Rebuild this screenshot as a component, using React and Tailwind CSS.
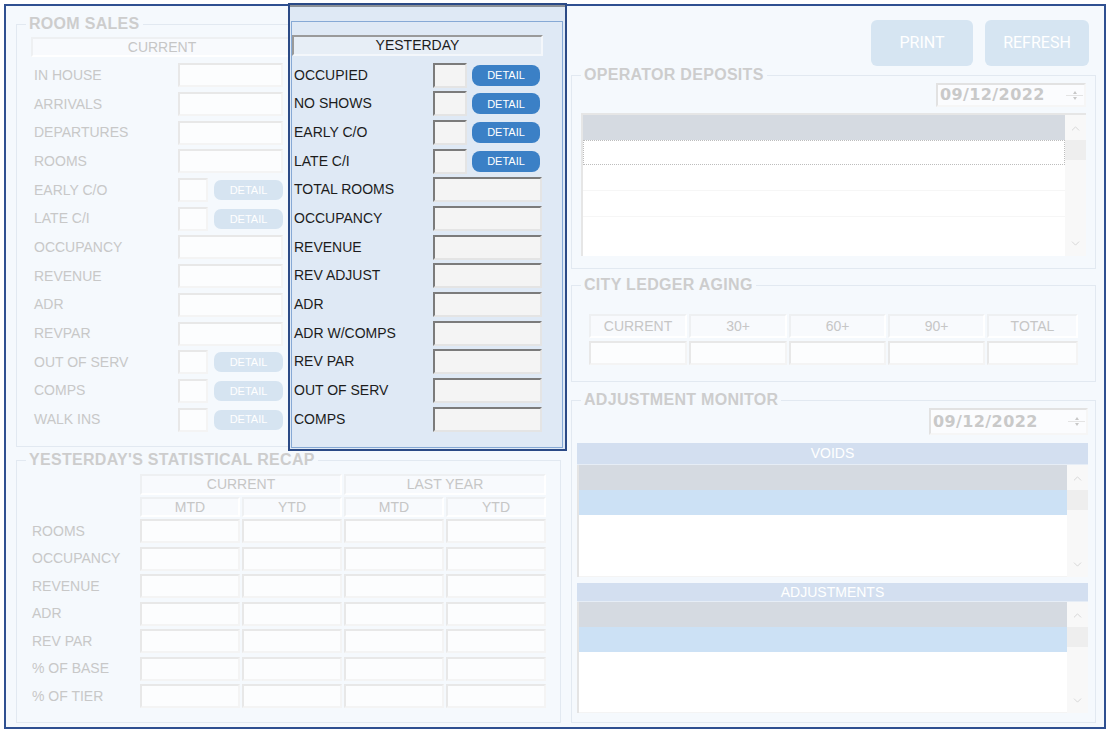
import React from "react";
import { ChevronUp, ChevronDown } from "lucide-react";

const roomSales = [
  { label: "IN HOUSE" },
  { label: "ARRIVALS" },
  { label: "DEPARTURES" },
  { label: "ROOMS" },
  { label: "EARLY C/O", detail: true },
  { label: "LATE C/I", detail: true },
  { label: "OCCUPANCY" },
  { label: "REVENUE" },
  { label: "ADR" },
  { label: "REVPAR" },
  { label: "OUT OF SERV", detail: true },
  { label: "COMPS", detail: true },
  { label: "WALK INS", detail: true }
];

const yesterday = [
  { label: "OCCUPIED", detail: true },
  { label: "NO SHOWS", detail: true },
  { label: "EARLY C/O", detail: true },
  { label: "LATE C/I", detail: true },
  { label: "TOTAL ROOMS" },
  { label: "OCCUPANCY" },
  { label: "REVENUE" },
  { label: "REV ADJUST" },
  { label: "ADR" },
  { label: "ADR W/COMPS" },
  { label: "REV PAR" },
  { label: "OUT OF SERV" },
  { label: "COMPS" }
];

const recapRows = ["ROOMS", "OCCUPANCY", "REVENUE", "ADR", "REV PAR", "% OF BASE", "% OF TIER"];
const agingCols = ["CURRENT", "30+", "60+", "90+", "TOTAL"];

// faded (disabled) text box
const FadedBox = ({ className = "" }) => (
  <div className={`h-[24px] border-2 border-t-[#e8e8e8] border-l-[#e8e8e8] border-r-[#f4f4f4] border-b-[#f4f4f4] bg-[#fcfdfe] ${className}`} />
);

// active sunken text box
const SunkenBox = ({ className = "" }) => (
  <div className={`h-[25px] border-2 border-t-[#7b7b7b] border-l-[#7b7b7b] border-r-[#e4e4e4] border-b-[#e4e4e4] bg-[#f4f4f4] ${className}`} />
);

const FadedHead = ({ children, className = "" }) => (
  <div className={`flex items-center justify-center border-2 border-t-[#eef0f2] border-l-[#eef0f2] border-r-white border-b-white bg-[#f8fafd] text-[14px] text-[#c6c6c6] ${className}`}>
    {children}
  </div>
);

const Group = ({ title, className = "", children }) => (
  <fieldset className={`border border-[#e2e9f1] ${className}`}>
    <legend className="ml-[9px] px-[3px] text-[16px] leading-[16px] font-bold tracking-[0.3px] text-[#cdcdcd]">{title}</legend>
    {children}
  </fieldset>
);

const Scrollbar = () => (
  <div className="w-[21px] bg-[#f8f8f8] flex flex-col items-center">
    <ChevronUp size={13} strokeWidth={1.5} className="mt-[7px] text-[#cfcfcf]" />
    <div className="mt-[5px] w-[21px] h-[20px] bg-[#eeeeee]" />
    <div className="flex-1" />
    <ChevronDown size={13} strokeWidth={1.5} className="mb-[6px] text-[#cfcfcf]" />
  </div>
);

const DateBox = ({ className = "" }) => (
  <div className={`ml-auto flex border-2 border-t-[#e2e2e2] border-l-[#e2e2e2] border-r-[#f6f6f6] border-b-[#f6f6f6] bg-[#fbfcfe] ${className}`}>
    <div className="flex-1 flex items-center pl-[2px] font-['DejaVu_Sans',sans-serif] font-bold text-[16px] tracking-[0.4px] text-[#c9c9c9]">
      09/12/2022
    </div>
    <div className="w-[19px] flex flex-col items-center justify-center gap-[1px]">
      <div className="w-0 h-0 border-l-[2px] border-r-[2px] border-b-[3px] border-l-transparent border-r-transparent border-b-[#c8c8c8]" />
      <div className="w-[17px] h-px bg-[#e4e4e4]" />
      <div className="w-0 h-0 border-l-[2px] border-r-[2px] border-t-[3px] border-l-transparent border-r-transparent border-t-[#c8c8c8]" />
    </div>
  </div>
);

const MonitorList = ({ title, headH, listH, className = "" }) => (
  <div className={className}>
    <div className={`flex items-center justify-center bg-[#d3dff0] border-b border-[#e6edf6] text-[14px] text-white ${headH}`}>{title}</div>
    <div className={`flex bg-white border-l-2 border-[#e4e4e4] ${listH}`}>
      <div className="flex-1 flex flex-col">
        <div className="h-[25px] bg-[#d5dae1]" />
        <div className="h-[25px] bg-[#cce1f5]" />
        <div className="flex-1 border-b border-[#f4f4f4]" />
      </div>
      <Scrollbar />
    </div>
  </div>
);

export default function App() {
  return (
    <div className="relative w-[1110px] h-[733px] bg-white p-[4px] font-['Liberation_Sans',Arial,sans-serif]">
      <div className="w-[1102px] h-[725px] border-2 border-[#2f5091] bg-[#f5f9fd] flex pl-[10px]">
        {/* Left column */}
        <div className="w-[545px] flex flex-col">
          <Group title="ROOM SALES" className="mt-[10px]">
            <div className="h-[414px] pl-[14px] pt-[5px]">
              <FadedHead className="w-[262px] h-[20px]">CURRENT</FadedHead>
              <div className="mt-[4px]">
                {roomSales.map((r) => (
                  <div key={r.label} className="flex items-center h-[28.7px]">
                    <div className="w-[147px] pl-[3px] text-[14px] text-[#c8c8c8]">{r.label}</div>
                    {r.detail ? (
                      <>
                        <FadedBox className="w-[30px]" />
                        <div className="ml-[6px] w-[69px] h-[20px] rounded-[7px] bg-[#d6e4f1] flex items-center justify-center text-[11px] text-white">DETAIL</div>
                      </>
                    ) : (
                      <FadedBox className="w-[105px]" />
                    )}
                  </div>
                ))}
              </div>
            </div>
          </Group>

          <Group title="YESTERDAY'S STATISTICAL RECAP" className="mt-[5px]">
            <div className="h-[254px] pl-[15px] pt-[6px]">
              <div className="grid grid-cols-[106px_100px_100px_100px_100px] gap-x-[2px]">
                <div />
                <FadedHead className="col-span-2 h-[21px]">CURRENT</FadedHead>
                <FadedHead className="col-span-2 h-[21px]">LAST YEAR</FadedHead>
              </div>
              <div className="mt-[2px] grid grid-cols-[106px_100px_100px_100px_100px] gap-x-[2px]">
                <div />
                <FadedHead className="h-[20px]">MTD</FadedHead>
                <FadedHead className="h-[20px]">YTD</FadedHead>
                <FadedHead className="h-[20px]">MTD</FadedHead>
                <FadedHead className="h-[20px]">YTD</FadedHead>
              </div>
              <div className="mt-[2px]">
                {recapRows.map((label) => (
                  <div key={label} className="grid grid-cols-[106px_100px_100px_100px_100px] gap-x-[2px] h-[27.5px]">
                    <div className="h-[24px] flex items-center text-[14px] text-[#c8c8c8]">{label}</div>
                    <FadedBox />
                    <FadedBox />
                    <FadedBox />
                    <FadedBox />
                  </div>
                ))}
              </div>
            </div>
          </Group>
        </div>

        {/* Right column */}
        <div className="ml-[10px] w-[525px] flex flex-col">
          <div className="mt-[14px] pr-[7px] flex justify-end gap-[12px]">
            <div className="w-[102px] h-[46px] rounded-[6px] bg-[#d6e5f2] flex items-center justify-center text-[16px] text-white font-['Roboto',sans-serif]">PRINT</div>
            <div className="w-[104px] h-[46px] rounded-[6px] bg-[#d6e5f2] flex items-center justify-center text-[16px] text-white font-['Roboto',sans-serif]">REFRESH</div>
          </div>

          <Group title="OPERATOR DEPOSITS" className="mt-[1px]">
            <div className="h-[185px] pl-[9px] pr-[9px] flex flex-col">
              <DateBox className="w-[150px] h-[24px]" />
              <div className="mt-[6px] h-[143px] flex bg-white border-l-2 border-t-2 border-[#e6e6e6]">
                <div className="flex-1 flex flex-col">
                  <div className="h-[25px] bg-[#d5dae1]" />
                  <div className="h-[25px] border border-dotted border-[#bdbdbd]" />
                  <div className="h-[26px] border-b border-[#f6f6f6]" />
                  <div className="h-[26px] border-b border-[#f6f6f6]" />
                  <div className="flex-1" />
                </div>
                <Scrollbar />
              </div>
            </div>
          </Group>

          <Group title="CITY LEDGER AGING" className="mt-[8px]">
            <div className="h-[88px] pl-[17px] pt-[21px]">
              <div className="grid grid-cols-[98px_98px_97px_97px_91px] gap-x-[2px] gap-y-[3px]">
                {agingCols.map((c) => (
                  <FadedHead key={c} className="h-[24px]">{c}</FadedHead>
                ))}
                {agingCols.map((c) => (
                  <FadedBox key={c} />
                ))}
              </div>
            </div>
          </Group>

          <Group title="ADJUSTMENT MONITOR" className="mt-[10px]">
            <div className="h-[314px] pl-[5px] pr-[7px] flex flex-col">
              <DateBox className="w-[159px] h-[27px]" />
              <MonitorList title="VOIDS" headH="h-[22px]" listH="h-[112px]" className="mt-[8px]" />
              <MonitorList title="ADJUSTMENTS" headH="h-[19px]" listH="h-[111px]" className="mt-[6px]" />
            </div>
          </Group>
        </div>
      </div>

      {/* Yesterday popup panel */}
      <div className="absolute left-[288px] top-[3px] w-[279px] h-[448px] border-2 border-[#2b4a86] bg-[#dfe9f5]">
        <div className="h-[2px] bg-[#8b9096]" />
        <div className="mt-[14px] ml-[1px] w-[272px] h-[427px] border border-[#86a9d5]">
          <div className="mt-[13px] w-[251px] h-[21px] flex items-center justify-center border-2 border-t-[#9a9a9a] border-l-[#9a9a9a] border-r-[#f4f7fb] border-b-[#f4f7fb] bg-[#e7eef6] text-[14px] text-[#1c1c1c]">
            YESTERDAY
          </div>
          <div className="mt-[5px]">
            {yesterday.map((r) => (
              <div key={r.label} className="flex items-center h-[28.67px]">
                <div className="w-[141px] pl-[2px] text-[14px] text-[#1c1c1c]">{r.label}</div>
                {r.detail ? (
                  <>
                    <SunkenBox className="w-[34px]" />
                    <div className="ml-[5px] w-[68px] h-[21px] rounded-[8px] bg-[#3b80c6] flex items-center justify-center text-[11px] text-white">DETAIL</div>
                  </>
                ) : (
                  <SunkenBox className="w-[109px]" />
                )}
              </div>
            ))}
          </div>
        </div>
      </div>
    </div>
  );
}
